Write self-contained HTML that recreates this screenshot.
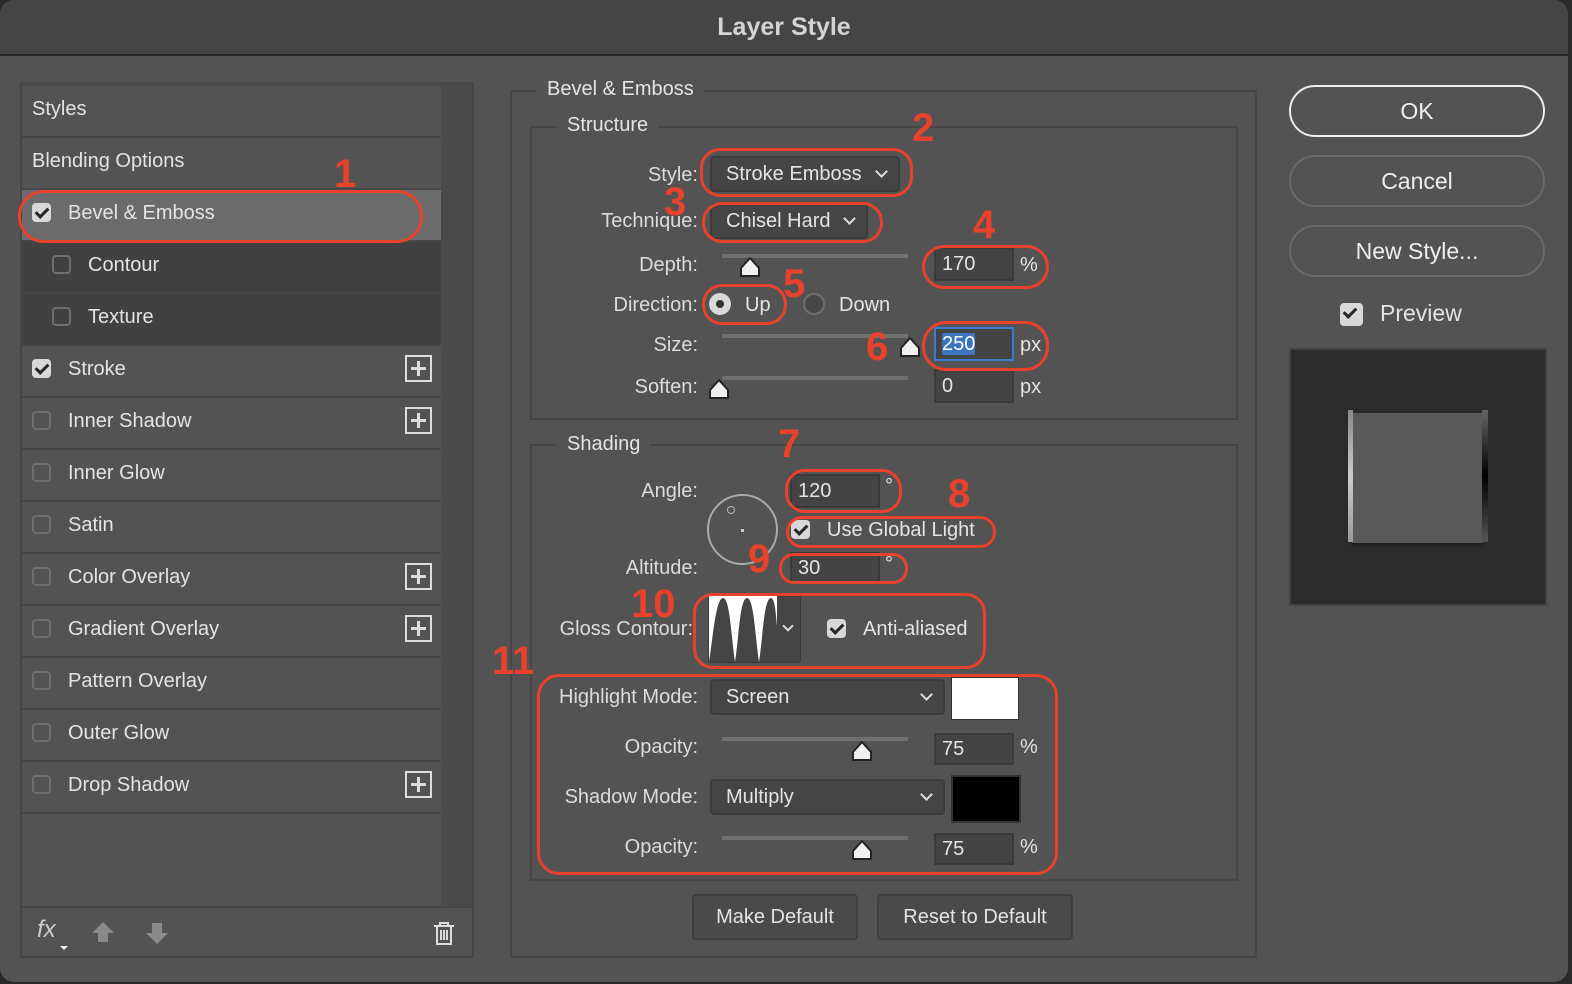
<!DOCTYPE html>
<html><head><meta charset="utf-8"><style>
*{box-sizing:border-box;margin:0;padding:0}
body{width:1572px;height:984px;background:#2a2a2a;font-family:"Liberation Sans",sans-serif;color:#e4e4e4;position:relative;overflow:hidden}
.a{position:absolute}
.win{left:0;top:0;width:1568px;height:982px;background:#535353;border-radius:14px;overflow:hidden}
.title{left:0;top:0;width:1568px;height:56px;background:#454545;border-bottom:2px solid #262626;text-align:center;font-size:25px;font-weight:bold;line-height:54px;color:#d4d4d4}
.t{position:absolute;font-size:20px;line-height:24px;white-space:nowrap}
.lbl{position:absolute;font-size:20px;line-height:24px;text-align:right;width:300px;color:#dcdcdc}
.row{position:absolute;left:22px;width:419px;height:50px;background:#535353}
.cb{position:absolute;width:19px;height:19px;border:2px solid #6f6f6f;border-radius:4px}
.cbc{position:absolute;width:19px;height:19px;background:#d8d8d8;border-radius:4px}
.cbc:after{content:"";position:absolute;left:6px;top:2px;width:5px;height:10px;border:solid #262626;border-width:0 3px 3px 0;transform:rotate(45deg)}
.plus{position:absolute;left:405px;width:27px;height:27px;border:2px solid #ddd}
.plus:before{content:"";position:absolute;left:4px;top:10px;width:15px;height:3px;background:#ddd}
.plus:after{content:"";position:absolute;left:10px;top:4px;width:3px;height:15px;background:#ddd}
.box{position:absolute;border:2px solid #474747}
.leg{position:absolute;background:#535353;padding:0 10px;font-size:20px;line-height:24px}
.dd{position:absolute;background:#454545;border:2px solid #3c3c3c;border-radius:4px;font-size:20px;line-height:32px;padding-left:14px}
.dd .ch{position:absolute;right:12px;top:9px;width:9px;height:9px;border:solid #ddd;border-width:0 2px 2px 0;transform:rotate(45deg)}
.in{position:absolute;background:#444;border:2px solid #3a3a3a;font-size:20px;line-height:30px;padding-left:6px;height:34px}
.tr{position:absolute;height:4px;background:#717171;width:186px;left:722px}
.th{position:absolute;width:22px;height:22px}
.r{position:absolute;border:3px solid #e8412c;border-radius:26px}
.n{position:absolute;color:#e8412c;font-weight:bold;font-size:40px;line-height:40px}
.btn{position:absolute;border:2px solid #6a6a6a;border-radius:26px;text-align:center;font-size:23px;color:#eee}
.b2{position:absolute;border:2px solid #3e3e3e;background:#4a4a4a;border-radius:4px;text-align:center;font-size:20px;line-height:42px}
</style></head><body>
<div class="a win">
<div class="a title">Layer Style</div>

<div class="a" style="left:20px;top:82px;width:454px;height:876px;border:2px solid #474747;background:#4a4a4a"></div>
<div class="a" style="left:22px;top:84px;width:419px;height:822px;background:#474747"></div>
<div class="row" style="top:86px"></div><div class="t" style="left:32px;top:97px">Styles</div>
<div class="row" style="top:138px"></div><div class="t" style="left:32px;top:149px">Blending Options</div>
<div class="row" style="top:190px;background:#6b6b6b"></div><div class="cbc" style="left:32px;top:203px"></div><div class="t" style="left:68px;top:201px">Bevel &amp; Emboss</div>
<div class="row" style="top:242px;background:#414141"></div><div class="cb" style="left:52px;top:255px"></div><div class="t" style="left:88px;top:253px">Contour</div>
<div class="row" style="top:294px;background:#414141"></div><div class="cb" style="left:52px;top:307px"></div><div class="t" style="left:88px;top:305px">Texture</div>
<div class="row" style="top:346px"></div><div class="cbc" style="left:32px;top:359px"></div><div class="t" style="left:68px;top:357px">Stroke</div><div class="plus" style="top:355px"></div>
<div class="row" style="top:398px"></div><div class="cb" style="left:32px;top:411px"></div><div class="t" style="left:68px;top:409px">Inner Shadow</div><div class="plus" style="top:407px"></div>
<div class="row" style="top:450px"></div><div class="cb" style="left:32px;top:463px"></div><div class="t" style="left:68px;top:461px">Inner Glow</div>
<div class="row" style="top:502px"></div><div class="cb" style="left:32px;top:515px"></div><div class="t" style="left:68px;top:513px">Satin</div>
<div class="row" style="top:554px"></div><div class="cb" style="left:32px;top:567px"></div><div class="t" style="left:68px;top:565px">Color Overlay</div><div class="plus" style="top:563px"></div>
<div class="row" style="top:606px"></div><div class="cb" style="left:32px;top:619px"></div><div class="t" style="left:68px;top:617px">Gradient Overlay</div><div class="plus" style="top:615px"></div>
<div class="row" style="top:658px"></div><div class="cb" style="left:32px;top:671px"></div><div class="t" style="left:68px;top:669px">Pattern Overlay</div>
<div class="row" style="top:710px"></div><div class="cb" style="left:32px;top:723px"></div><div class="t" style="left:68px;top:721px">Outer Glow</div>
<div class="row" style="top:762px"></div><div class="cb" style="left:32px;top:775px"></div><div class="t" style="left:68px;top:773px">Drop Shadow</div><div class="plus" style="top:771px"></div>
<div class="row" style="top:814px;height:92px"></div>
<div class="a" style="left:22px;top:906px;width:450px;height:50px;background:#535353;border-top:2px solid #474747"></div>
<div class="t" style="left:37px;top:918px;font-style:italic;font-size:24px;color:#ccc">fx</div>
<div class="a" style="left:60px;top:946px;border:4px solid transparent;border-top:4px solid #eee"></div>
<svg class="a" style="left:90px;top:920px" width="26" height="26"><path d="M13 2 L24 13 H18 V22 H8 V13 H2 Z" fill="#8a8a8a"/></svg>
<svg class="a" style="left:144px;top:920px" width="26" height="26"><path d="M13 24 L24 13 H18 V3 H8 V13 H2 Z" fill="#8a8a8a"/></svg>
<svg class="a" style="left:432px;top:920px" width="24" height="26"><path d="M2 6 H22 M8 6 V3 H16 V6 M5 6 V24 H19 V6 M9 10 V20 M12 10 V20 M15 10 V20" stroke="#ddd" stroke-width="2" fill="none"/></svg>

<div class="box" style="left:510px;top:90px;width:747px;height:868px"></div>
<div class="leg" style="left:537px;top:77px">Bevel &amp; Emboss</div>
<div class="box" style="left:530px;top:126px;width:708px;height:294px"></div>
<div class="leg" style="left:557px;top:113px">Structure</div>
<div class="lbl" style="left:398px;top:163px">Style:</div>
<div class="dd" style="left:710px;top:156px;width:190px;height:36px">Stroke Emboss<span class="ch"></span></div>
<div class="lbl" style="left:398px;top:209px">Technique:</div>
<div class="dd" style="left:710px;top:203px;width:158px;height:36px">Chisel Hard<span class="ch"></span></div>
<div class="lbl" style="left:398px;top:253px">Depth:</div>
<div class="tr" style="top:254px"></div>
<svg class="th" style="left:739px;top:256px"><path d="M11 2 L20 12 V20 H2 V12 Z" fill="#f0f0f0" stroke="#222" stroke-width="2" stroke-linejoin="round"/></svg>
<div class="in" style="left:934px;top:247px;width:80px">170</div><div class="t" style="left:1020px;top:253px">%</div>
<div class="lbl" style="left:398px;top:293px">Direction:</div>
<div class="a" style="left:709px;top:293px;width:22px;height:22px;border-radius:50%;background:#d9d9d9"></div>
<div class="a" style="left:716px;top:300px;width:8px;height:8px;border-radius:50%;background:#333"></div>
<div class="t" style="left:745px;top:293px">Up</div>
<div class="a" style="left:803px;top:293px;width:22px;height:22px;border-radius:50%;border:2px solid #707070;background:#474747"></div>
<div class="t" style="left:839px;top:293px">Down</div>
<div class="lbl" style="left:398px;top:333px">Size:</div>
<div class="tr" style="top:334px"></div>
<svg class="th" style="left:899px;top:336px"><path d="M11 2 L20 12 V20 H2 V12 Z" fill="#f0f0f0" stroke="#222" stroke-width="2" stroke-linejoin="round"/></svg>
<div class="in" style="left:934px;top:327px;width:80px;border-color:#3a7ad0"><span style="background:#3b74c0;color:#fff">250</span></div><div class="t" style="left:1020px;top:333px">px</div>
<div class="lbl" style="left:398px;top:375px">Soften:</div>
<div class="tr" style="top:376px"></div>
<svg class="th" style="left:708px;top:378px"><path d="M11 2 L20 12 V20 H2 V12 Z" fill="#f0f0f0" stroke="#222" stroke-width="2" stroke-linejoin="round"/></svg>
<div class="in" style="left:934px;top:369px;width:80px">0</div><div class="t" style="left:1020px;top:375px">px</div>

<div class="box" style="left:530px;top:444px;width:708px;height:437px"></div>
<div class="leg" style="left:557px;top:432px">Shading</div>
<div class="lbl" style="left:398px;top:479px">Angle:</div>
<div class="in" style="left:790px;top:474px;width:90px;height:34px">120</div><div class="t" style="left:885px;top:474px">°</div>
<div class="a" style="left:707px;top:494px;width:71px;height:71px;border-radius:50%;border:2px solid #aaa"></div>
<div class="a" style="left:727px;top:506px;width:8px;height:8px;border-radius:50%;border:1.5px solid #bbb"></div>
<div class="a" style="left:741px;top:529px;width:3px;height:3px;background:#ccc"></div>
<div class="cbc" style="left:791px;top:520px"></div><div class="t" style="left:827px;top:518px">Use Global Light</div>
<div class="lbl" style="left:398px;top:556px">Altitude:</div>
<div class="in" style="left:790px;top:552px;width:90px;height:32px;line-height:28px">30</div><div class="t" style="left:885px;top:552px">°</div>
<div class="lbl" style="left:393px;top:617px">Gloss Contour:</div>
<div class="a" style="left:708px;top:595px;width:93px;height:68px;background:#454545;border:1px solid #3a3a3a;border-radius:3px"></div>
<svg class="a" style="left:709px;top:596px" width="68" height="66"><rect width="68" height="66" fill="#fff"/><path d="M0 66 C4 40 7 2 14 2 C21 2 22 40 26 66 C30 40 31 2 38 2 C45 2 46 40 50 66 C54 40 55 2 62 2 C66 2 67 20 68 30 V66 Z" fill="#454545"/></svg>
<div class="a" style="left:784px;top:622px;width:8px;height:8px;border:solid #ddd;border-width:0 2px 2px 0;transform:rotate(45deg)"></div>
<div class="cbc" style="left:827px;top:619px"></div><div class="t" style="left:863px;top:617px">Anti-aliased</div>

<div class="lbl" style="left:398px;top:685px">Highlight Mode:</div>
<div class="dd" style="left:710px;top:679px;width:235px;height:36px">Screen<span class="ch"></span></div>
<div class="a" style="left:951px;top:677px;width:68px;height:43px;background:#fff;border:1px solid #333"></div>
<div class="lbl" style="left:398px;top:735px">Opacity:</div>
<div class="tr" style="top:737px"></div>
<svg class="th" style="left:851px;top:740px"><path d="M11 2 L20 12 V20 H2 V12 Z" fill="#f0f0f0" stroke="#222" stroke-width="2" stroke-linejoin="round"/></svg>
<div class="in" style="left:934px;top:733px;width:80px;height:32px;line-height:28px">75</div><div class="t" style="left:1020px;top:735px">%</div>
<div class="lbl" style="left:398px;top:785px">Shadow Mode:</div>
<div class="dd" style="left:710px;top:779px;width:235px;height:36px">Multiply<span class="ch"></span></div>
<div class="a" style="left:951px;top:775px;width:70px;height:48px;background:#000;border:2px solid #333"></div>
<div class="lbl" style="left:398px;top:835px">Opacity:</div>
<div class="tr" style="top:836px"></div>
<svg class="th" style="left:851px;top:839px"><path d="M11 2 L20 12 V20 H2 V12 Z" fill="#f0f0f0" stroke="#222" stroke-width="2" stroke-linejoin="round"/></svg>
<div class="in" style="left:934px;top:833px;width:80px;height:32px;line-height:28px">75</div><div class="t" style="left:1020px;top:835px">%</div>

<div class="b2" style="left:692px;top:894px;width:166px;height:46px">Make Default</div>
<div class="b2" style="left:877px;top:894px;width:196px;height:46px">Reset to Default</div>

<div class="btn" style="left:1289px;top:85px;width:256px;height:52px;line-height:48px;border-color:#eee">OK</div>
<div class="btn" style="left:1289px;top:155px;width:256px;height:52px;line-height:48px">Cancel</div>
<div class="btn" style="left:1289px;top:225px;width:256px;height:52px;line-height:48px">New Style...</div>
<div class="cbc" style="left:1340px;top:303px;width:23px;height:23px"></div>
<div class="t" style="left:1380px;top:300px;font-size:23px;line-height:26px">Preview</div>
<div class="a" style="left:1289px;top:348px;width:258px;height:258px;background:#2b2b2b;border:2px solid #434343"></div>
<div class="a" style="left:1352px;top:413px;width:131px;height:130px;background:#595959;box-shadow:0 2px 3px #1e1e1e"></div>
<div class="a" style="left:1348px;top:410px;width:5px;height:132px;background:linear-gradient(#888,#ccc,#999)"></div>
<div class="a" style="left:1482px;top:410px;width:6px;height:132px;background:linear-gradient(#666,#000 50%,#555)"></div>

<div class="r" style="left:18px;top:190px;width:405px;height:53px"></div>
<div class="r" style="left:700px;top:148px;width:213px;height:49px;border-radius:20px"></div>
<div class="r" style="left:702px;top:202px;width:181px;height:41px;border-radius:20px"></div>
<div class="r" style="left:922px;top:245px;width:127px;height:44px;border-radius:22px"></div>
<div class="r" style="left:702px;top:284px;width:85px;height:41px;border-radius:20px"></div>
<div class="r" style="left:922px;top:321px;width:127px;height:50px;border-radius:24px"></div>
<div class="r" style="left:785px;top:469px;width:117px;height:44px;border-radius:20px"></div>
<div class="r" style="left:786px;top:516px;width:210px;height:32px;border-radius:16px"></div>
<div class="r" style="left:779px;top:553px;width:129px;height:31px;border-radius:15px"></div>
<div class="r" style="left:693px;top:593px;width:293px;height:76px;border-radius:20px"></div>
<div class="r" style="left:537px;top:674px;width:521px;height:201px;border-radius:22px"></div>
<div class="n" style="left:334px;top:154px">1</div>
<div class="n" style="left:912px;top:108px">2</div>
<div class="n" style="left:664px;top:182px">3</div>
<div class="n" style="left:973px;top:205px">4</div>
<div class="n" style="left:783px;top:264px">5</div>
<div class="n" style="left:866px;top:327px">6</div>
<div class="n" style="left:778px;top:424px">7</div>
<div class="n" style="left:948px;top:474px">8</div>
<div class="n" style="left:748px;top:539px">9</div>
<div class="n" style="left:631px;top:584px">10</div>
<div class="n" style="left:492px;top:641px">11</div>
</div>
</body></html>
